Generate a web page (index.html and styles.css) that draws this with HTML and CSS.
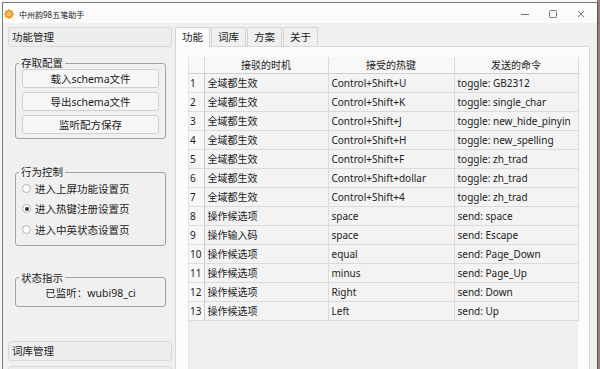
FILE: index.html
```html
<!DOCTYPE html>
<html lang="zh">
<head>
    <meta charset="UTF-8">
    <meta name="viewport" content="width=device-width, initial-scale=1.0">
    <title>中州韵98五笔助手</title>
    <link rel="stylesheet" href="styles.css">
</head>
<body>
    <div class="window">
        <div class="titlebar">
            <svg class="app-icon" width="10" height="10" viewBox="0 0 10 10">
                <g fill="#f39a1e">
                    <circle cx="5" cy="1.8" r="1.6"/>
                    <circle cx="5" cy="8.2" r="1.6"/>
                    <circle cx="1.8" cy="5" r="1.6"/>
                    <circle cx="8.2" cy="5" r="1.6"/>
                    <circle cx="2.7" cy="2.7" r="1.5"/>
                    <circle cx="7.3" cy="2.7" r="1.5"/>
                    <circle cx="2.7" cy="7.3" r="1.5"/>
                    <circle cx="7.3" cy="7.3" r="1.5"/>
                </g>
                <circle cx="5" cy="5" r="1.4" fill="#f7c15a"/>
            </svg>
            <span class="title">中州韵98五笔助手</span>
            <div class="controls">
                <svg width="10" height="10" viewBox="0 0 10 10"><path d="M1 5.5h8" stroke="#777" stroke-width="1"/></svg>
                <svg width="10" height="10" viewBox="0 0 10 10"><rect x="1.5" y="1.5" width="7" height="7" rx="1" fill="none" stroke="#777" stroke-width="1"/></svg>
                <svg width="10" height="10" viewBox="0 0 10 10"><path d="M2 2l6 6M8 2l-6 6" stroke="#777" stroke-width="1"/></svg>
            </div>
        </div>

        <div class="main">
            <aside class="toolbox">
                <div class="page-btn">功能管理</div>
                <div class="page-body">
                    <fieldset class="group group-files">
                        <legend>存取配置</legend>
                        <button class="btn">载入schema文件</button>
                        <button class="btn">导出schema文件</button>
                        <button class="btn">监听配方保存</button>
                    </fieldset>

                    <fieldset class="group group-radios">
                        <legend>行为控制</legend>
                        <label class="radio"><span class="dot"></span>进入上屏功能设置页</label>
                        <label class="radio checked"><span class="dot"></span>进入热键注册设置页</label>
                        <label class="radio"><span class="dot"></span>进入中英状态设置页</label>
                    </fieldset>

                    <fieldset class="group group-status">
                        <legend>状态指示</legend>
                        <div class="status">已监听：wubi98_ci</div>
                    </fieldset>
                </div>
                <div class="page-btn">词库管理</div>
                <div class="page-btn"></div>
            </aside>

            <section class="tabs">
                <div class="tab-bar">
                    <div class="tab active">功能</div>
                    <div class="tab">词库</div>
                    <div class="tab">方案</div>
                    <div class="tab">关于</div>
                </div>
                <div class="tab-pane">
                    <div class="table-view">
                        <table class="hotkeys">
                            <colgroup>
                                <col class="c-num">
                                <col class="c-when">
                                <col class="c-key">
                                <col class="c-cmd">
                            </colgroup>
                            <thead>
                                <tr><th></th><th>接驳的时机</th><th>接受的热键</th><th>发送的命令</th></tr>
                            </thead>
                            <tbody>
                                <tr><td class="num">1</td><td>全域都生效</td><td>Control+Shift+U</td><td>toggle: GB2312</td></tr>
                                <tr><td class="num">2</td><td>全域都生效</td><td>Control+Shift+K</td><td>toggle: single_char</td></tr>
                                <tr><td class="num">3</td><td>全域都生效</td><td>Control+Shift+J</td><td>toggle: new_hide_pinyin</td></tr>
                                <tr><td class="num">4</td><td>全域都生效</td><td>Control+Shift+H</td><td>toggle: new_spelling</td></tr>
                                <tr><td class="num">5</td><td>全域都生效</td><td>Control+Shift+F</td><td>toggle: zh_trad</td></tr>
                                <tr><td class="num">6</td><td>全域都生效</td><td>Control+Shift+dollar</td><td>toggle: zh_trad</td></tr>
                                <tr><td class="num">7</td><td>全域都生效</td><td>Control+Shift+4</td><td>toggle: zh_trad</td></tr>
                                <tr><td class="num">8</td><td>操作候选项</td><td>space</td><td>send: space</td></tr>
                                <tr><td class="num">9</td><td>操作输入码</td><td>space</td><td>send: Escape</td></tr>
                                <tr><td class="num">10</td><td>操作候选项</td><td>equal</td><td>send: Page_Down</td></tr>
                                <tr><td class="num">11</td><td>操作候选项</td><td>minus</td><td>send: Page_Up</td></tr>
                                <tr><td class="num">12</td><td>操作候选项</td><td>Right</td><td>send: Down</td></tr>
                                <tr><td class="num">13</td><td>操作候选项</td><td>Left</td><td>send: Up</td></tr>
                            </tbody>
                        </table>
                    </div>
                </div>
            </section>
        </div>
    </div>
</body>
</html>
```

FILE: styles.css
```css
* {
    margin: 0;
    padding: 0;
    box-sizing: border-box;
}

html, body {
    height: 100%;
    overflow: hidden;
}

body {
    font-family: "Noto Sans", "Noto Sans CJK SC", sans-serif;
    font-size: 10px;
    color: #1b1b1b;
    background: linear-gradient(to right, #f7f7f7 597px, #9c7c7a 597px);
}

.window {
    width: 596px;
    height: 372px;
    margin: 2px 0 0 2px;
    border: 1px solid #7a7a7a;
    border-right-color: #555;
    background: #f0f0f0;
    display: flex;
    flex-direction: column;
}

/* title bar */
.titlebar {
    height: 20px;
    flex-shrink: 0;
    background: #fbfbfb;
    display: flex;
    align-items: center;
    padding: 2px 0 0 1px;
}

.app-icon {
    margin-right: 5px;
}

.title {
    font-size: 8px;
    color: #222;
}

.controls {
    margin-left: auto;
    display: flex;
    gap: 18px;
    padding-right: 11px;
}

/* main area */
.main {
    flex: 1;
    min-height: 0;
    overflow: hidden;
    display: flex;
    padding: 4px 0 0 5px;
    gap: 3px;
}

.toolbox {
    width: 164px;
    flex-shrink: 0;
    display: flex;
    flex-direction: column;
}

.page-btn {
    height: 20px;
    line-height: 18px;
    padding-left: 3px;
    font-size: 10.5px;
    background: #eeeeee;
    border: 1px solid #d9d9d9;
    border-radius: 3px;
    flex-shrink: 0;
}

.page-btn + .page-btn {
    margin-top: 5px;
}

.page-body {
    display: flex;
    flex-direction: column;
    flex-shrink: 0;
    padding: 0 6px 0 7px;
    height: 294px;
}

.group {
    border: 1px solid #a3a3a3;
    border-radius: 3px;
    padding: 0 6px 4px 6px;
    display: flex;
    flex-direction: column;
}

.group legend {
    margin-left: -3px;
    padding: 0 2px;
    line-height: 12px;
    font-size: 10.5px;
}

.group-files {
    margin-top: 10px;
    gap: 4px;
}

.btn {
    height: 19px;
    font-family: inherit;
    font-size: 10.5px;
    color: #1b1b1b;
    background: #f6f6f6;
    border: 1px solid #cfcfcf;
    border-radius: 3px;
}

.group-radios {
    margin-top: 27px;
    padding-left: 6px;
    padding-bottom: 5px;
}

.radio {
    height: 20.5px;
    display: flex;
    align-items: center;
    gap: 4px;
    font-size: 10.5px;
}

.dot {
    width: 9px;
    height: 9px;
    border: 1px solid #b5b5b5;
    border-radius: 50%;
    background: #fbfbfb;
    display: flex;
    align-items: center;
    justify-content: center;
}

.radio.checked .dot::after {
    content: "";
    width: 4px;
    height: 4px;
    border-radius: 50%;
    background: #333;
}

.group-status {
    margin-top: 26px;
}

.status {
    height: 18px;
    line-height: 18px;
    text-align: center;
    font-size: 10.5px;
}

/* tab widget */
.tabs {
    width: 415px;
    display: flex;
    flex-direction: column;
}

.tab-bar {
    display: flex;
    height: 19px;
    flex-shrink: 0;
    align-items: flex-end;
    position: relative;
    z-index: 1;
}

.tab {
    width: 35px;
    height: 19px;
    line-height: 18px;
    text-align: center;
    font-size: 10.5px;
    background: #f0f0f0;
    border: 1px solid #d4d4d4;
    border-bottom: none;
    border-radius: 2px 2px 0 0;
    margin-right: 1px;
}

.tab.active {
    height: 20px;
    background: #fcfcfc;
    margin-bottom: -1px;
}

.tab-pane {
    flex: 1;
    background: #fcfcfc;
    border: 1px solid #d8d8d8;
    padding: 10px 0 0 12px;
}

.table-view {
    width: 390px;
    height: 100%;
    background: #efefef;
    border-left: 1px solid #e2e2e2;
}

.hotkeys {
    width: 389px;
    border-collapse: collapse;
    table-layout: fixed;
}

.c-num { width: 15px; }
.c-when { width: 124px; }
.c-key { width: 126px; }
.c-cmd { width: 124px; }

.hotkeys th {
    height: 16px;
    font-weight: normal;
    background: #f8f8f8;
    border-right: 1px solid #dadada;
    border-bottom: 1px solid #cfcfcf;
    white-space: nowrap;
}

.hotkeys td {
    height: 19px;
    padding-left: 3px;
    background: #f3f3f3;
    border: 1px solid #dbdbdb;
    white-space: nowrap;
    overflow: hidden;
}

.hotkeys td.num {
    padding-left: 1px;
    background: #f7f7f7;
    border-right: 1px solid #c9c9c9;
    border-left: none;
}
```
